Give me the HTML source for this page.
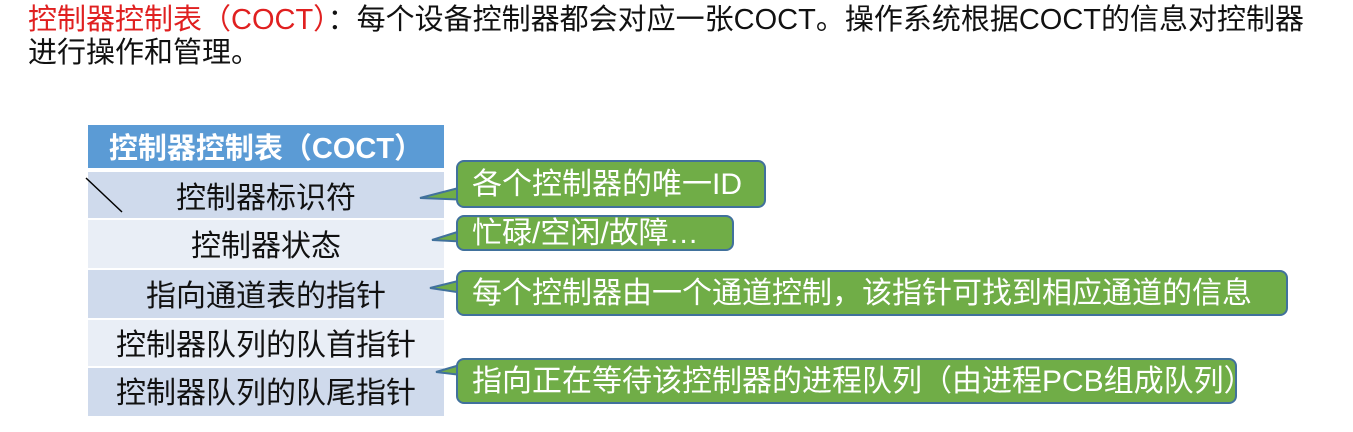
<!DOCTYPE html>
<html><head><meta charset="utf-8"><style>
body{margin:0;width:1353px;height:432px;background:#fff;position:relative;overflow:hidden;font-family:"Liberation Sans","Noto Sans CJK SC",sans-serif;}
.t{position:absolute;left:28px;font-size:29px;line-height:33px;color:#111;white-space:nowrap;}
.r{position:absolute;left:88px;width:356px;text-align:center;font-size:30px;color:#111;}
.c{position:absolute;left:456px;background:#70ad47;border:2px solid #41719c;border-radius:8px;color:#fff;font-size:30px;padding-left:14px;box-sizing:border-box;white-space:nowrap;}
svg{position:absolute;left:0;top:0}
</style></head><body>
<div class="t" style="top:4px"><span style="color:#e02020">控制器控制表（COCT）</span>：每个设备控制器都会对应一张COCT。操作系统根据COCT的信息对控制器<br>进行操作和管理。</div>
<div class="r" style="top:125px;height:43px;line-height:48px;background:#5b9bd5;color:#fff;font-weight:bold;font-size:29px">控制器控制表（COCT）</div>
<div class="r" style="top:172px;height:46px;line-height:54px;background:#cfdaec">控制器标识符</div>
<div class="r" style="top:220px;height:48px;line-height:54px;background:#e9eef6">控制器状态</div>
<div class="r" style="top:270px;height:48px;line-height:54px;background:#cfdaec">指向通道表的指针</div>
<div class="r" style="top:320px;height:46px;line-height:52px;background:#e9eef6">控制器队列的队首指针</div>
<div class="r" style="top:368px;height:48px;line-height:52px;background:#cfdaec">控制器队列的队尾指针</div>
<svg width="1353" height="432">
<line x1="86" y1="178" x2="122" y2="212" stroke="#000" stroke-width="1.5"/>
<polygon points="420,198 470,185 470,200" fill="#70ad47" stroke="#41719c" stroke-width="2"/>
<polygon points="432,240 470,228 470,242" fill="#70ad47" stroke="#41719c" stroke-width="2"/>
<polygon points="430,288 470,278 470,294" fill="#70ad47" stroke="#41719c" stroke-width="2"/>
<polygon points="436,372 470,362 470,376" fill="#70ad47" stroke="#41719c" stroke-width="2"/>
</svg>
<div class="c" style="top:160px;width:310px;height:48px;line-height:46px">各个控制器的唯一ID</div>
<div class="c" style="top:215px;width:278px;height:36px;line-height:33px">忙碌/空闲/故障…</div>
<div class="c" style="top:270px;width:832px;height:46px;line-height:43px">每个控制器由一个通道控制，该指针可找到相应通道的信息</div>
<div class="c" style="top:358px;width:781px;height:46px;line-height:43px">指向正在等待该控制器的进程队列（由进程PCB组成队列）</div>
</body></html>
